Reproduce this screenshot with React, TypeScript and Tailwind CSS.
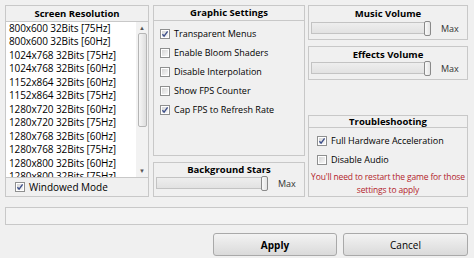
import React from "react";

const resolutions = [
  "800x600 32Bits [75Hz]",
  "800x600 32Bits [60Hz]",
  "1024x768 32Bits [75Hz]",
  "1024x768 32Bits [60Hz]",
  "1152x864 32Bits [60Hz]",
  "1152x864 32Bits [75Hz]",
  "1280x720 32Bits [60Hz]",
  "1280x720 32Bits [75Hz]",
  "1280x768 32Bits [60Hz]",
  "1280x768 32Bits [75Hz]",
  "1280x800 32Bits [60Hz]",
  "1280x800 32Bits [75Hz]",
];

function Check({ checked }: { checked?: boolean }) {
  return (
    <svg width="10" height="10" viewBox="0 0 10 10" className="shrink-0">
      <defs>
        <linearGradient id="cbg" x1="0" y1="0" x2="1" y2="1">
          <stop offset="0" stopColor="#d6d6d6" />
          <stop offset="1" stopColor="#f7f7f7" />
        </linearGradient>
      </defs>
      <rect x="0.5" y="0.5" width="9" height="9" fill="#fff" stroke="#8e8f8f" />
      <rect x="2" y="2" width="6" height="6" fill="url(#cbg)" />
      {checked && (
        <path d="M2.4 5.2 L4.1 7.2 L7.6 2.4" fill="none" stroke="#3d4f8a" strokeWidth="1.4" />
      )}
    </svg>
  );
}

function CheckRow({ label, checked }: { label: string; checked?: boolean }) {
  return (
    <div className="flex items-center gap-[4px] h-[19px]">
      <Check checked={checked} />
      <span>{label}</span>
    </div>
  );
}

function Slider() {
  return (
    <div className="flex items-center">
      <div className="relative flex-1 h-[12px] border border-[#c3c3c3] bg-gradient-to-b from-[#eeeeee] to-[#e2e2e2]">
        <div className="absolute right-[-2px] top-[-2px] w-[7px] h-[15px] rounded-[2px] border border-[#8a8a8a] bg-gradient-to-r from-[#fafafa] to-[#e4e4e4]" />
      </div>
      <span className="w-[35px] pl-[11px] text-[#333]">Max</span>
    </div>
  );
}

export default function App() {
  return (
    <div className="w-[474px] h-[258px] bg-[#f0f0f0] pl-[5px] pt-[5px] text-[9px] leading-none text-black font-['Open_Sans',sans-serif]">
      <div className="flex h-[192px]">
        {/* screen resolution */}
        <div className="w-[144px] flex flex-col border border-[#c8c8c8]">
          <div className="h-[16px] border-b border-[#c8c8c8] flex items-center justify-center font-bold text-[9.5px]">
            Screen Resolution
          </div>
          <div className="flex-1 min-h-0 flex bg-white overflow-hidden">
            <div className="flex-1 pl-[3px] text-[10px] tracking-[-0.1px] -mt-[1px]">
              {resolutions.map((r) => (
                <div key={r} className="h-[13.5px] flex items-center whitespace-nowrap">
                  {r}
                </div>
              ))}
            </div>
            <div className="w-[12px] bg-[#f2f2f2] flex flex-col items-center pt-[3px]">
              <span className="text-[6px] text-[#555] h-[7px]">▲</span>
              <div className="w-[9px] h-[94px] mt-[1px] rounded-[2px] border border-[#b5b5b5] bg-gradient-to-r from-[#f6f6f6] to-[#dedede]" />
              <div className="flex-1" />
              <span className="text-[6px] text-[#555] pb-[3px]">▼</span>
            </div>
          </div>
          <div className="h-[19px] border-t border-[#c8c8c8] flex items-center gap-[4px] pl-[9px]">
            <Check checked />
            <span className="text-[10px]">Windowed Mode</span>
          </div>
        </div>

        {/* graphic settings + background stars */}
        <div className="w-[152px] ml-[4px] flex flex-col gap-[6px]">
          <div className="flex-1 border border-[#c8c8c8]">
            <div className="h-[15px] border-b border-[#c8c8c8] flex items-center justify-center font-bold text-[9.5px]">
              Graphic Settings
            </div>
            <div className="pl-[6px] pt-[3px]">
              <CheckRow label="Transparent Menus" checked />
              <CheckRow label="Enable Bloom Shaders" />
              <CheckRow label="Disable Interpolation" />
              <CheckRow label="Show FPS Counter" />
              <CheckRow label="Cap FPS to Refresh Rate" checked />
            </div>
          </div>
          <div className="h-[35px] border border-[#c8c8c8] px-[2px]">
            <div className="h-[14px] flex items-center justify-center font-bold text-[9.5px]">
              Background Stars
            </div>
            <Slider />
          </div>
        </div>

        {/* volumes + troubleshooting */}
        <div className="w-[160px] ml-[3px] flex flex-col">
          <div className="h-[35px] border border-[#c8c8c8] px-[2px]">
            <div className="h-[16px] flex items-center justify-center font-bold text-[9.5px]">
              Music Volume
            </div>
            <Slider />
          </div>
          <div className="h-[34px] mt-[6px] border border-[#c8c8c8] px-[2px]">
            <div className="h-[15px] flex items-center justify-center font-bold text-[9.5px]">
              Effects Volume
            </div>
            <Slider />
          </div>
          <div className="flex-1" />
          <div className="h-[82px] border border-[#c8c8c8]">
            <div className="h-[12px] border-b border-[#c8c8c8] flex items-center justify-center font-bold text-[9.5px]">
              Troubleshooting
            </div>
            <div className="pl-[8px] pt-[3px]">
              <CheckRow label="Full Hardware Acceleration" checked />
              <CheckRow label="Disable Audio" />
            </div>
            <p className="text-center text-[#b3242c] leading-[13px] mt-[1px] text-[8.5px] tracking-[-0.15px] whitespace-nowrap">
              You'll need to restart the game for those
              <br />
              settings to apply
            </p>
          </div>
        </div>
      </div>

      {/* status bar */}
      <div className="w-[463px] h-[18px] mt-[10px] border border-[#c8c8c8] bg-[#f3f3f3]" />

      {/* buttons */}
      <div className="w-[463px] mt-[8px] flex justify-end gap-[6px]">
        <button
          type="button"
          className="w-[124px] h-[23px] rounded-[3px] border border-[#a9a9a9] bg-gradient-to-b from-[#f3f3f3] to-[#dadada] font-bold text-[10px]"
        >
          Apply
        </button>
        <button
          type="button"
          className="w-[125px] h-[23px] rounded-[3px] border border-[#a9a9a9] bg-gradient-to-b from-[#f3f3f3] to-[#dadada] text-[10px]"
        >
          Cancel
        </button>
      </div>
    </div>
  );
}
